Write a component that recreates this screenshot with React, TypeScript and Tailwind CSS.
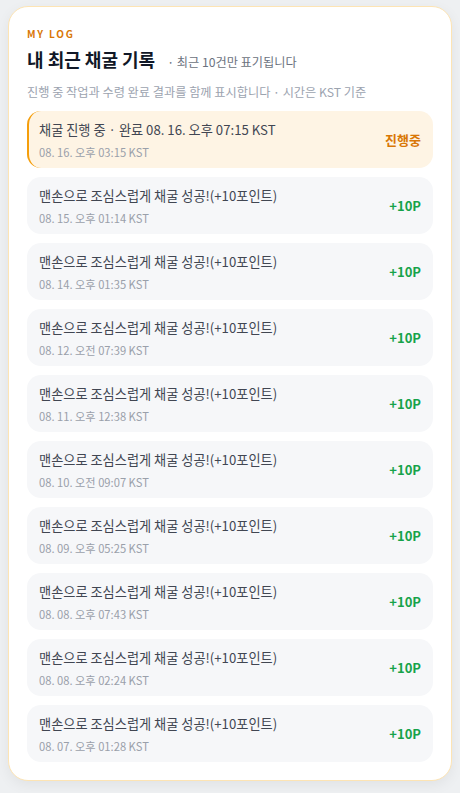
import React from 'react';

type LogItem = {
  title: string;
  time: string;
  badge: string;
  active?: boolean;
};

const logs: LogItem[] = [
  { title: '채굴 진행 중 · 완료 08. 16. 오후 07:15 KST', time: '08. 16. 오후 03:15 KST', badge: '진행중', active: true },
  { title: '맨손으로 조심스럽게 채굴 성공!(+10포인트)', time: '08. 15. 오후 01:14 KST', badge: '+10P' },
  { title: '맨손으로 조심스럽게 채굴 성공!(+10포인트)', time: '08. 14. 오후 01:35 KST', badge: '+10P' },
  { title: '맨손으로 조심스럽게 채굴 성공!(+10포인트)', time: '08. 12. 오전 07:39 KST', badge: '+10P' },
  { title: '맨손으로 조심스럽게 채굴 성공!(+10포인트)', time: '08. 11. 오후 12:38 KST', badge: '+10P' },
  { title: '맨손으로 조심스럽게 채굴 성공!(+10포인트)', time: '08. 10. 오전 09:07 KST', badge: '+10P' },
  { title: '맨손으로 조심스럽게 채굴 성공!(+10포인트)', time: '08. 09. 오후 05:25 KST', badge: '+10P' },
  { title: '맨손으로 조심스럽게 채굴 성공!(+10포인트)', time: '08. 08. 오후 07:43 KST', badge: '+10P' },
  { title: '맨손으로 조심스럽게 채굴 성공!(+10포인트)', time: '08. 08. 오후 02:24 KST', badge: '+10P' },
  { title: '맨손으로 조심스럽게 채굴 성공!(+10포인트)', time: '08. 07. 오후 01:28 KST', badge: '+10P' },
];

function LogRow({ item }: { item: LogItem }) {
  return (
    <li
      className={
        item.active
          ? 'flex h-[57px] items-center justify-between rounded-[14px] border-l-2 border-[#f59e0b] bg-[#fef4e4] pl-[10px] pr-[12px]'
          : 'flex h-[57px] items-center justify-between rounded-[14px] bg-[#f6f7f9] px-[12px]'
      }
    >
      <div className="flex flex-col">
        <span className="text-[13.2px] leading-[20px] text-[#414652]">{item.title}</span>
        <span className="mt-[4px] text-[11.2px] leading-[16px] text-[#9aa0aa]">{item.time}</span>
      </div>
      <span
        className={
          item.active
            ? 'text-[13px] font-bold text-[#d97706]'
            : 'text-[13px] font-bold text-[#16a34a]'
        }
      >
        {item.badge}
      </span>
    </li>
  );
}

export default function App() {
  return (
    <div
      className="min-h-[793px] bg-[#eef0f2] px-[8px] pt-[6px]"
      style={{ fontFamily: '"Noto Sans CJK KR", "Noto Sans", sans-serif' }}
    >
      <section className="w-[444px] rounded-[20px] border border-[#fde4b4] bg-white px-[18px] pb-[18px] pt-[20px] shadow-[0_4px_14px_rgba(0,0,0,0.06)]">
        <p className="text-[10px] font-bold leading-[14px] tracking-[0.18em] text-[#d97706]">MY LOG</p>
        <div className="mt-[5px] flex items-baseline gap-[12px]">
          <h2 className="text-[18px] font-bold leading-[26px] text-[#111827]">내 최근 채굴 기록</h2>
          <span className="text-[12.2px] text-[#6b7280]">· 최근 10건만 표기됩니다</span>
        </div>
        <p className="mt-[11px] text-[12.2px] leading-[18px] text-[#9ca3af]">
          진행 중 작업과 수령 완료 결과를 함께 표시합니다 · 시간은 KST 기준
        </p>
        <ul className="mt-[10px] flex flex-col gap-[9px]">
          {logs.map((item, i) => (
            <LogRow key={i} item={item} />
          ))}
        </ul>
      </section>
    </div>
  );
}
